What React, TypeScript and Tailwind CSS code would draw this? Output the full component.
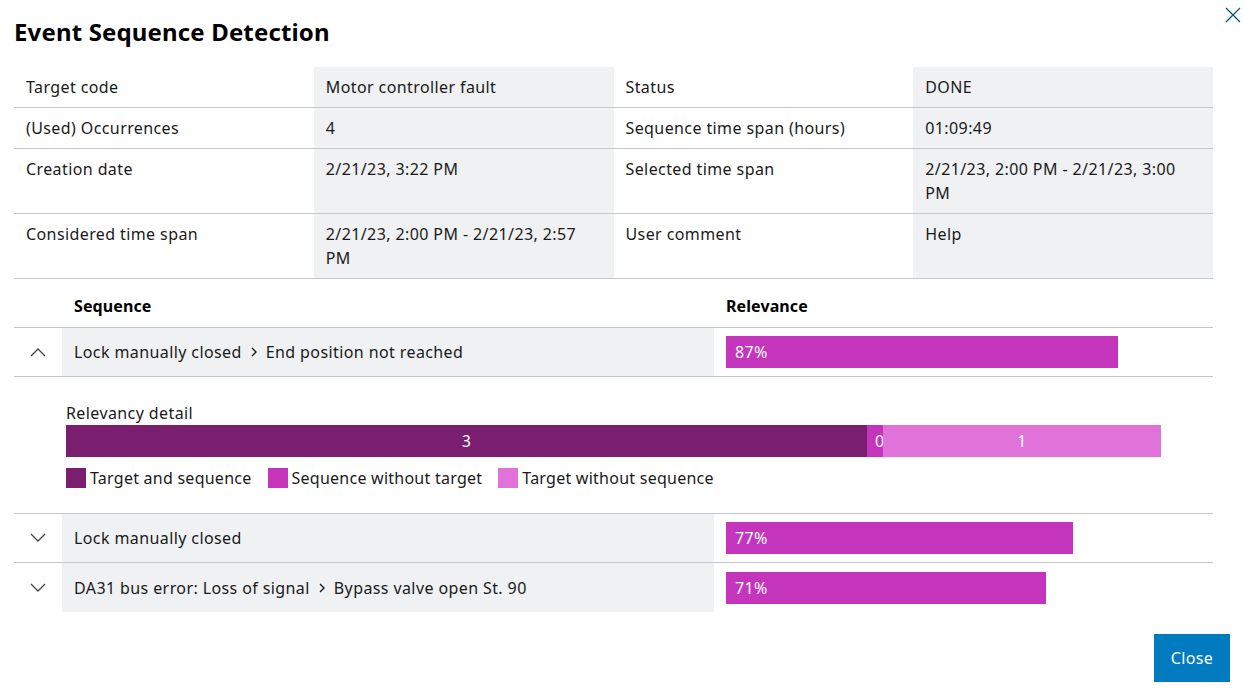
import React from "react";

/* ─── Data ─── */

type InfoRow = [string, string, string, string];

const INFO: InfoRow[] = [
  ["Target code", "Motor controller fault", "Status", "DONE"],
  ["(Used) Occurrences", "4", "Sequence time span (hours)", "01:09:49"],
  ["Creation date", "2/21/23, 3:22 PM", "Selected time span", "2/21/23, 2:00 PM - 2/21/23, 3:00 PM"],
  ["Considered time span", "2/21/23, 2:00 PM - 2/21/23, 2:57 PM", "User comment", "Help"],
];

interface Seq {
  steps: string[];
  relevance: number;
  open?: boolean;
}

const SEQUENCES: Seq[] = [
  { steps: ["Lock manually closed", "End position not reached"], relevance: 87, open: true },
  { steps: ["Lock manually closed"], relevance: 77 },
  { steps: ["DA31 bus error: Loss of signal", "Bypass valve open St. 90"], relevance: 71 },
];

/* ─── Icons ─── */

function Chevron({ up }: { up?: boolean }) {
  return (
    <svg width="16" height="10" viewBox="0 0 16 10" className="text-[#43464a]">
      <polyline
        points={up ? "1,9 8,2 15,9" : "1,1 8,8 15,1"}
        fill="none"
        stroke="currentColor"
        strokeWidth="1.3"
      />
    </svg>
  );
}

function Sep() {
  return (
    <svg width="8" height="12" viewBox="0 0 8 12" className="mx-[8px] text-[#1a1a1a]">
      <polyline points="2,2 6,6 2,10" fill="none" stroke="currentColor" strokeWidth="1.4" />
    </svg>
  );
}

/* ─── Parts ─── */

function SequenceRow({ seq, last }: { seq: Seq; last?: boolean }) {
  return (
    <div className={`flex h-[49px] ${last ? "" : "border-b border-[#c1c7cc]"}`}>
      <div className="w-[48px] flex items-center justify-center">
        <Chevron up={seq.open} />
      </div>
      <div className="w-[652px] bg-[#eff1f2] flex items-center px-3">
        {seq.steps.map((s, i) => (
          <React.Fragment key={s}>
            {i > 0 && <Sep />}
            <span>{s}</span>
          </React.Fragment>
        ))}
      </div>
      <div className="flex-1 flex items-center px-3">
        <div
          className="h-[32px] bg-[#c535bc] text-white flex items-center pl-[9px]"
          style={{ width: `${(seq.relevance / 100) * 450}px` }}
        >
          {seq.relevance}%
        </div>
      </div>
    </div>
  );
}

function RelevancyDetail() {
  return (
    <div className="border-b border-[#c1c7cc] pl-[52px] pt-[24px] pb-[23px]">
      <div className="leading-6">Relevancy detail</div>
      <div className="flex h-[32px] w-[1095px] text-white">
        <div className="w-[801px] bg-[#7a1e6f] flex items-center justify-center">3</div>
        <div className="w-[16px] bg-[#c535bc] flex items-center overflow-hidden pl-[8px]">0</div>
        <div className="flex-1 bg-[#e072d9] flex items-center justify-center">1</div>
      </div>
      <div className="flex items-center mt-[9px] gap-4 tracking-[0.25px]">
        {[
          ["bg-[#7a1e6f]", "Target and sequence"],
          ["bg-[#c535bc]", "Sequence without target"],
          ["bg-[#e072d9]", "Target without sequence"],
        ].map(([c, label]) => (
          <div key={label} className="flex items-center gap-1">
            <span className={`w-[20px] h-[20px] ${c}`} />
            <span>{label}</span>
          </div>
        ))}
      </div>
    </div>
  );
}

/* ─── Main ─── */

export default function App() {
  return (
    <div
      className="relative w-[1245px] h-[693px] bg-white text-[#1a1a1a] text-[16px] tracking-[0.4px] overflow-hidden"
      style={{ fontFamily: '"Noto Sans", "Open Sans", sans-serif' }}
    >
      <button className="absolute right-[4px] top-[7px] text-[#005691]">
        <svg width="16" height="16" viewBox="0 0 16 16">
          <path d="M1 1 L15 15 M15 1 L1 15" stroke="currentColor" strokeWidth="1.3" />
        </svg>
      </button>

      <div className="pl-[14px] w-[1213px]">
        <h1 className="pt-[16px] text-[24px] leading-8 font-bold text-black tracking-[0.15px]">
          Event Sequence Detection
        </h1>

        <div className="mt-[19px] border-b border-[#c1c7cc]">
          {INFO.map((row, r) => (
            <div
              key={r}
              className={`grid grid-cols-4 leading-6 ${r < INFO.length - 1 ? "border-b border-[#c1c7cc]" : ""}`}
            >
              {row.map((cell, c) => (
                <div key={c} className={`px-3 py-2 ${c % 2 === 1 ? "bg-[#eff1f2]" : ""} ${r >= 2 ? "min-h-[64px]" : ""}`}>
                  {cell}
                </div>
              ))}
            </div>
          ))}
        </div>

        <div className="flex h-[49px] border-b border-[#c1c7cc] font-bold text-black pt-[15px] tracking-[0.1px]">
          <div className="w-[48px]" />
          <div className="w-[652px] px-3">Sequence</div>
          <div className="flex-1 px-3">Relevance</div>
        </div>

        <SequenceRow seq={SEQUENCES[0]} />
        <RelevancyDetail />
        <SequenceRow seq={SEQUENCES[1]} />
        <SequenceRow seq={SEQUENCES[2]} last />
      </div>

      <div className="flex justify-end pr-[15px] mt-[22px]">
        <button className="w-[76px] h-[48px] bg-[#007bc0] text-white">Close</button>
      </div>
    </div>
  );
}
